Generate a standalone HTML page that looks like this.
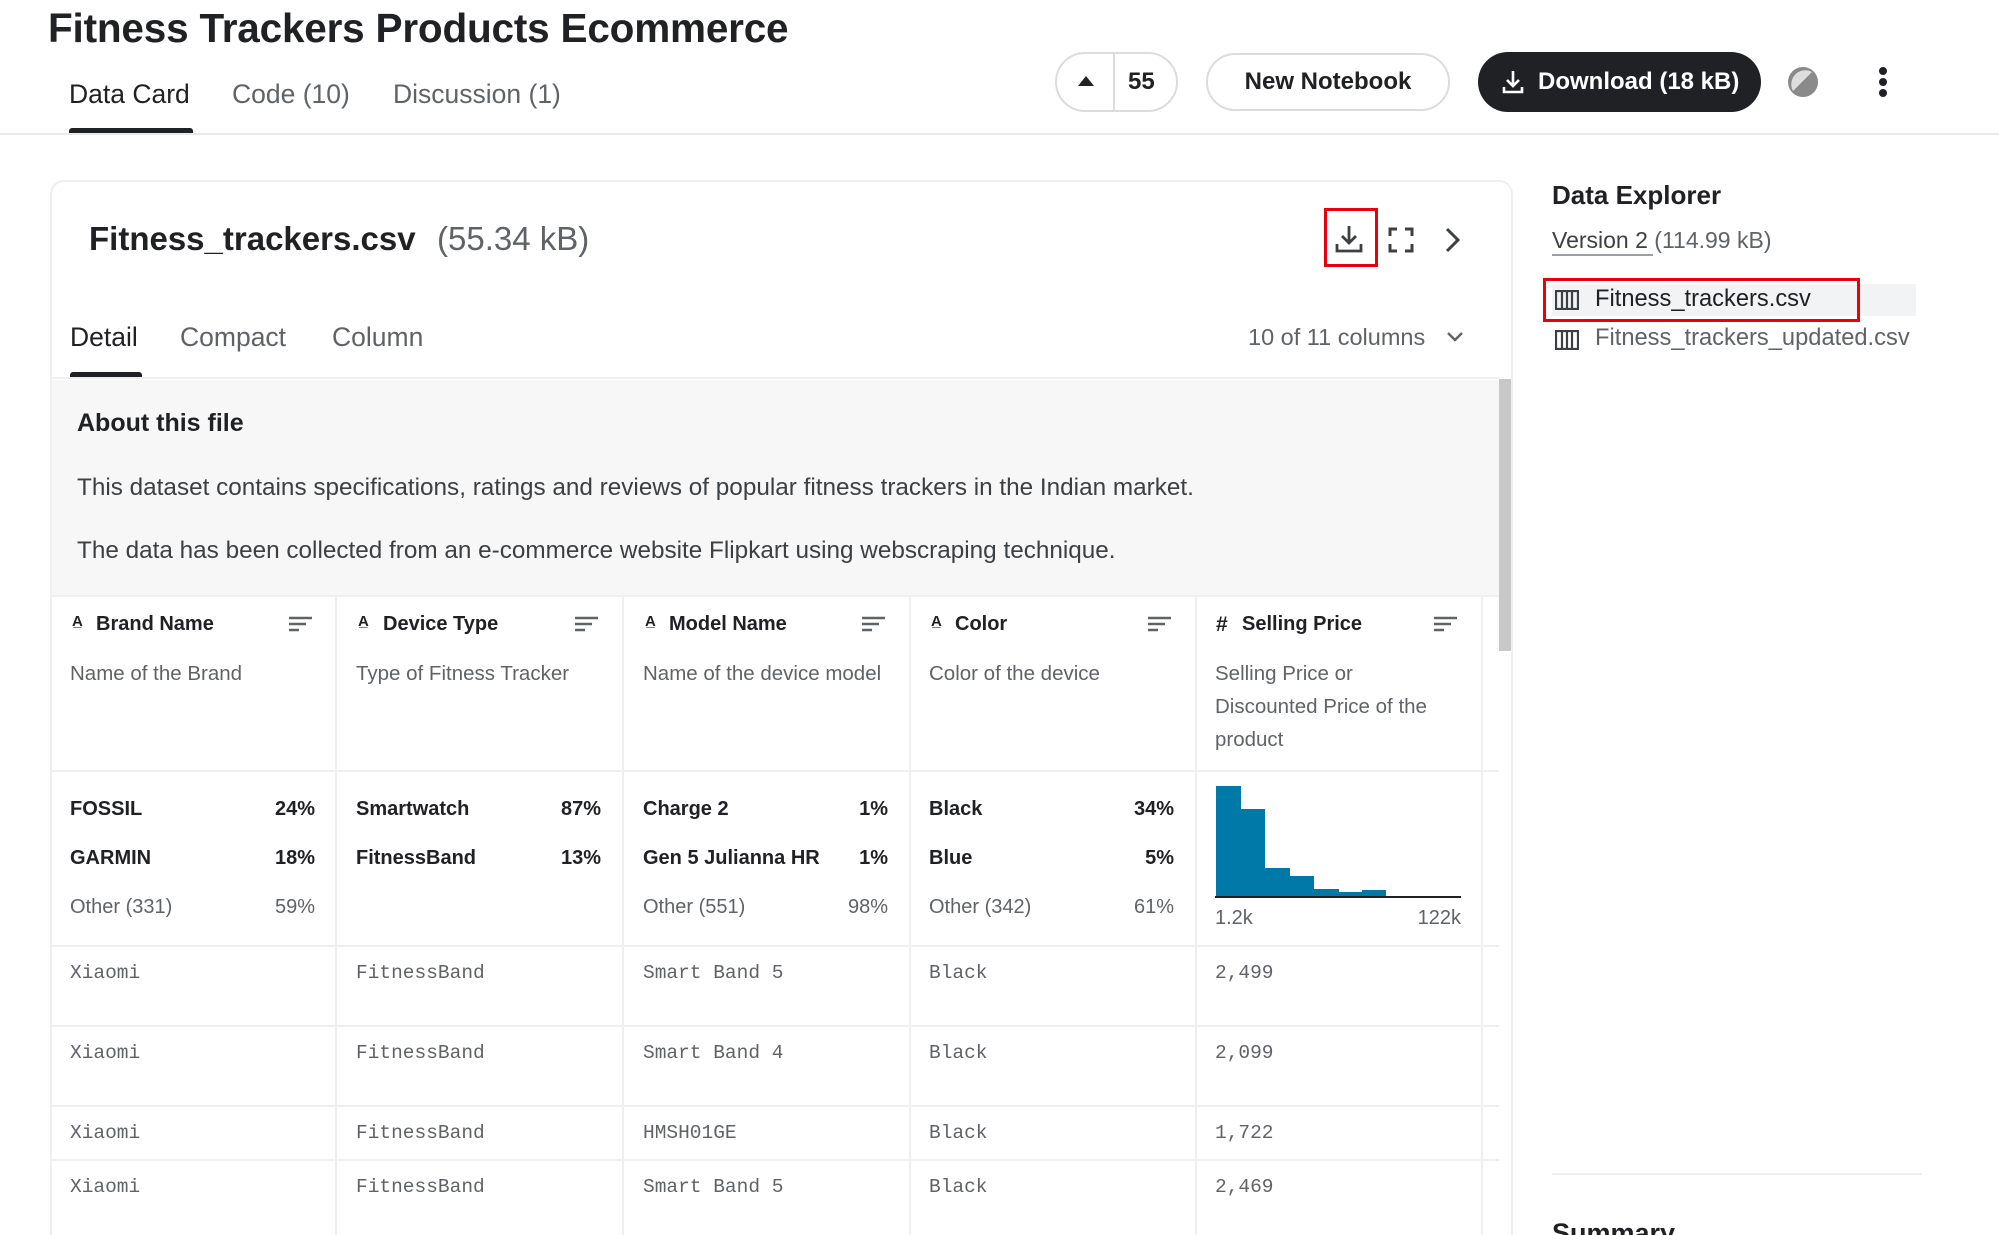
<!DOCTYPE html>
<html style="width:1999px;height:1235px;overflow:hidden"><head><meta charset="utf-8"><style>
*{margin:0;padding:0;box-sizing:border-box}
body{width:1999px;height:1235px;overflow:hidden;background:#fff;font-family:"Liberation Sans",sans-serif;color:#202124;position:relative}
.a{position:absolute;white-space:nowrap}
.t{line-height:1}
.g{color:#5f6368}
.mono{font-family:"Liberation Mono",monospace;color:#5f6368;font-size:19.5px}
.vl{position:absolute;width:2px;background:#efefef}
.hl{position:absolute;height:2px;background:#efefef}
.hd{font-size:20px;font-weight:bold;color:#202124}
.ds{font-size:20.5px;color:#5f6368;line-height:33px}
.st{font-size:20px;font-weight:bold}
</style></head><body>
<div class="a t" style="left:48px;top:8px;font-size:40.5px;font-weight:bold;letter-spacing:-0.2px">Fitness Trackers Products Ecommerce</div>
<div class="a t" style="left:69px;top:81px;font-size:26.5px">Data Card</div>
<div class="a t g" style="left:232px;top:81px;font-size:26.5px">Code (10)</div>
<div class="a t g" style="left:393px;top:81px;font-size:26.5px">Discussion (1)</div>
<div class="a" style="left:69px;top:128px;width:124px;height:5px;background:#202124;border-radius:3px 3px 0 0"></div>
<div class="a" style="left:0;top:133px;width:1999px;height:2px;background:#e8eaed"></div>

<div class="a" style="left:1055px;top:52px;width:123px;height:60px;border:2px solid #dadce0;border-radius:30px"></div>
<div class="a" style="left:1113px;top:53px;width:2px;height:58px;background:#dadce0"></div>
<div class="a" style="left:1078px;top:76px;width:0;height:0;border-left:8px solid transparent;border-right:8px solid transparent;border-bottom:10px solid #202124"></div>
<div class="a t" style="left:1128px;top:70px;font-size:24px;font-weight:bold">55</div>
<div class="a" style="left:1206px;top:53px;width:244px;height:58px;border:2px solid #dadce0;border-radius:30px"></div>
<div class="a t" style="left:1206px;top:70px;width:244px;text-align:center;font-size:24px;font-weight:bold">New Notebook</div>
<div class="a" style="left:1478px;top:52px;width:283px;height:60px;background:#202124;border-radius:30px"></div>
<svg class="a" style="left:1500px;top:68px" width="26" height="28" viewBox="0 0 26 28"><path d="M13 3v15M7 12l6 6 6-6M4 19v5h18v-5" stroke="#fff" stroke-width="2.6" fill="none"/></svg>
<div class="a t" style="left:1538px;top:70px;font-size:24px;font-weight:bold;color:#fff">Download (18 kB)</div>
<svg class="a" style="left:1786px;top:65px" width="34" height="34" viewBox="0 0 34 34"><circle cx="17" cy="17" r="14" fill="#8a8a8a" stroke="#8a8a8a" stroke-width="2"/><path d="M7 26A14 14 0 0 1 26 7Z" fill="#ddd"/></svg>
<div class="a" style="left:1879px;top:67px;width:8px;height:8px;border-radius:50%;background:#202124"></div>
<div class="a" style="left:1879px;top:78px;width:8px;height:8px;border-radius:50%;background:#202124"></div>
<div class="a" style="left:1879px;top:89px;width:8px;height:8px;border-radius:50%;background:#202124"></div>

<div class="a" style="left:50px;top:180px;width:1463px;height:1080px;border:2px solid #efefef;border-radius:14px;overflow:hidden">
<div class="a" style="left:0;top:198px;width:1461px;height:217px;background:#f7f7f7"></div>
</div>
<div class="a t" style="left:89px;top:222px;font-size:33px;font-weight:bold">Fitness_trackers.csv</div>
<div class="a t g" style="left:437px;top:222px;font-size:33px">(55.34 kB)</div>
<div class="a" style="left:1324px;top:208px;width:54px;height:59px;border:3px solid #e8000b"></div>
<svg class="a" style="left:1334px;top:224px" width="30" height="30" viewBox="0 0 30 30"><path d="M15 2v17M8 12l7 7 7-7M3 20v7h24v-7" stroke="#3c4043" stroke-width="2.8" fill="none"/></svg>
<svg class="a" style="left:1388px;top:227px" width="26" height="26" viewBox="0 0 26 26"><path d="M2 9V2h7M17 2h7v7M24 17v7h-7M9 24H2v-7" stroke="#3c4043" stroke-width="3" fill="none"/></svg>
<svg class="a" style="left:1443px;top:226px" width="20" height="28" viewBox="0 0 20 28"><path d="M4 3l11 11L4 25" stroke="#3c4043" stroke-width="3" fill="none"/></svg>

<div class="a t" style="left:70px;top:324px;font-size:26.5px">Detail</div>
<div class="a t g" style="left:180px;top:324px;font-size:26.5px">Compact</div>
<div class="a t g" style="left:332px;top:324px;font-size:26.5px">Column</div>
<div class="a" style="left:70px;top:372px;width:72px;height:5px;background:#202124;border-radius:3px 3px 0 0"></div>
<div class="a t g" style="left:1248px;top:326px;font-size:23.5px">10 of 11 columns</div>
<svg class="a" style="left:1446px;top:330px" width="18" height="14" viewBox="0 0 18 14"><path d="M2 3l7 7 7-7" stroke="#5f6368" stroke-width="2.4" fill="none"/></svg>
<div class="a" style="left:52px;top:377px;width:1447px;height:2px;background:#efefef"></div>
<div class="a" style="left:1499px;top:379px;width:12px;height:272px;background:#c8c8c8"></div>

<div class="a t" style="left:77px;top:411px;font-size:25px;font-weight:bold">About this file</div>
<div class="a t" style="left:77px;top:476px;font-size:24.3px;color:#3c4043">This dataset contains specifications, ratings and reviews of popular fitness trackers in the Indian market.</div>
<div class="a t" style="left:77px;top:539px;font-size:24.3px;color:#3c4043">The data has been collected from an e-commerce website Flipkart using webscraping technique.</div>

<div class="hl" style="left:52px;top:595px;width:1447px"></div>
<div class="hl" style="left:52px;top:770px;width:1447px"></div>
<div class="hl" style="left:52px;top:945px;width:1447px"></div>
<div class="hl" style="left:52px;top:1025px;width:1447px"></div>
<div class="hl" style="left:52px;top:1105px;width:1447px"></div>
<div class="hl" style="left:52px;top:1159px;width:1447px"></div>
<div class="vl" style="left:335px;top:595px;height:640px"></div>
<div class="vl" style="left:622px;top:595px;height:640px"></div>
<div class="vl" style="left:909px;top:595px;height:640px"></div>
<div class="vl" style="left:1195px;top:595px;height:640px"></div>
<div class="vl" style="left:1481px;top:595px;height:640px"></div>

<div class="a hd t" style="left:72px;top:614px;font-size:15px">A&#818;</div><div class="a hd t" style="left:96px;top:614px">Brand Name</div>
<div class="a hd t" style="left:358px;top:614px;font-size:15px">A&#818;</div><div class="a hd t" style="left:383px;top:614px">Device Type</div>
<div class="a hd t" style="left:645px;top:614px;font-size:15px">A&#818;</div><div class="a hd t" style="left:669px;top:614px">Model Name</div>
<div class="a hd t" style="left:931px;top:614px;font-size:15px">A&#818;</div><div class="a hd t" style="left:955px;top:614px">Color</div>
<div class="a hd t" style="left:1216px;top:614px;font-size:21px">#</div><div class="a hd t" style="left:1242px;top:614px">Selling Price</div>
<svg class="a" style="left:289px;top:616px" width="24" height="18" viewBox="0 0 24 18"><path d="M0 2h23M0 8h17M0 14h10" stroke="#5f6368" stroke-width="2.4"/></svg>
<svg class="a" style="left:575px;top:616px" width="24" height="18" viewBox="0 0 24 18"><path d="M0 2h23M0 8h17M0 14h10" stroke="#5f6368" stroke-width="2.4"/></svg>
<svg class="a" style="left:862px;top:616px" width="24" height="18" viewBox="0 0 24 18"><path d="M0 2h23M0 8h17M0 14h10" stroke="#5f6368" stroke-width="2.4"/></svg>
<svg class="a" style="left:1148px;top:616px" width="24" height="18" viewBox="0 0 24 18"><path d="M0 2h23M0 8h17M0 14h10" stroke="#5f6368" stroke-width="2.4"/></svg>
<svg class="a" style="left:1434px;top:616px" width="24" height="18" viewBox="0 0 24 18"><path d="M0 2h23M0 8h17M0 14h10" stroke="#5f6368" stroke-width="2.4"/></svg>

<div class="a ds" style="left:70px;top:657px">Name of the Brand</div>
<div class="a ds" style="left:356px;top:657px">Type of Fitness Tracker</div>
<div class="a ds" style="left:643px;top:657px">Name of the device model</div>
<div class="a ds" style="left:929px;top:657px">Color of the device</div>
<div class="a ds" style="left:1215px;top:657px">Selling Price or<br>Discounted Price of the<br>product</div>

<div class="a st t" style="left:70px;top:799px">FOSSIL</div><div class="a st t" style="left:265px;top:799px;width:50px;text-align:right">24%</div>
<div class="a st t" style="left:70px;top:848px">GARMIN</div><div class="a st t" style="left:265px;top:848px;width:50px;text-align:right">18%</div>
<div class="a t g" style="left:70px;top:897px;font-size:20px">Other (331)</div><div class="a t g" style="left:265px;top:897px;width:50px;text-align:right;font-size:20px">59%</div>

<div class="a st t" style="left:356px;top:799px">Smartwatch</div><div class="a st t" style="left:551px;top:799px;width:50px;text-align:right">87%</div>
<div class="a st t" style="left:356px;top:848px">FitnessBand</div><div class="a st t" style="left:551px;top:848px;width:50px;text-align:right">13%</div>

<div class="a st t" style="left:643px;top:799px">Charge 2</div><div class="a st t" style="left:838px;top:799px;width:50px;text-align:right">1%</div>
<div class="a st t" style="left:643px;top:848px">Gen 5 Julianna HR</div><div class="a st t" style="left:838px;top:848px;width:50px;text-align:right">1%</div>
<div class="a t g" style="left:643px;top:897px;font-size:20px">Other (551)</div><div class="a t g" style="left:838px;top:897px;width:50px;text-align:right;font-size:20px">98%</div>

<div class="a st t" style="left:929px;top:799px">Black</div><div class="a st t" style="left:1124px;top:799px;width:50px;text-align:right">34%</div>
<div class="a st t" style="left:929px;top:848px">Blue</div><div class="a st t" style="left:1124px;top:848px;width:50px;text-align:right">5%</div>
<div class="a t g" style="left:929px;top:897px;font-size:20px">Other (342)</div><div class="a t g" style="left:1124px;top:897px;width:50px;text-align:right;font-size:20px">61%</div>

<svg class="a" style="left:1214px;top:784px" width="250" height="116" viewBox="1214 784 250 116">
<g fill="#0079a8">
<rect x="1216" y="786" width="25" height="112"/>
<rect x="1241" y="809" width="24" height="89"/>
<rect x="1265" y="868" width="25" height="30"/>
<rect x="1290" y="876" width="24" height="22"/>
<rect x="1314" y="889" width="25" height="9"/>
<rect x="1339" y="892" width="23" height="6"/>
<rect x="1362" y="890" width="24" height="8"/>
<rect x="1436" y="896" width="24" height="2"/>
</g>
<rect x="1215" y="896" width="246" height="2" fill="#202124"/>
</svg>
<div class="a t g" style="left:1215px;top:908px;font-size:20px">1.2k</div>
<div class="a t g" style="left:1400px;top:908px;width:61px;text-align:right;font-size:20px">122k</div>

<div class="a mono t" style="left:70px;top:964px">Xiaomi</div><div class="a mono t" style="left:356px;top:964px">FitnessBand</div><div class="a mono t" style="left:643px;top:964px">Smart Band 5</div><div class="a mono t" style="left:929px;top:964px">Black</div><div class="a mono t" style="left:1215px;top:964px">2,499</div>
<div class="a mono t" style="left:70px;top:1044px">Xiaomi</div><div class="a mono t" style="left:356px;top:1044px">FitnessBand</div><div class="a mono t" style="left:643px;top:1044px">Smart Band 4</div><div class="a mono t" style="left:929px;top:1044px">Black</div><div class="a mono t" style="left:1215px;top:1044px">2,099</div>
<div class="a mono t" style="left:70px;top:1124px">Xiaomi</div><div class="a mono t" style="left:356px;top:1124px">FitnessBand</div><div class="a mono t" style="left:643px;top:1124px">HMSH01GE</div><div class="a mono t" style="left:929px;top:1124px">Black</div><div class="a mono t" style="left:1215px;top:1124px">1,722</div>
<div class="a mono t" style="left:70px;top:1178px">Xiaomi</div><div class="a mono t" style="left:356px;top:1178px">FitnessBand</div><div class="a mono t" style="left:643px;top:1178px">Smart Band 5</div><div class="a mono t" style="left:929px;top:1178px">Black</div><div class="a mono t" style="left:1215px;top:1178px">2,469</div>

<div class="a t" style="left:1552px;top:182px;font-size:26px;font-weight:bold">Data Explorer</div>
<div class="a t" style="left:1552px;top:229px;font-size:23px;color:#3c4043">Version 2 <span class="g">(114.99 kB)</span></div>
<div class="a" style="left:1552px;top:254px;width:101px;height:2px;background:#9aa0a6"></div>
<div class="a" style="left:1552px;top:284px;width:364px;height:32px;background:#f1f3f4"></div>
<div class="a" style="left:1543px;top:278px;width:317px;height:44px;border:3px solid #e8000b"></div>
<svg class="a" style="left:1555px;top:290px" width="24" height="20" viewBox="0 0 24 20"><path d="M1 1h22v18H1zM7 1v18M12 1v18M17 1v18" stroke="#3c4043" stroke-width="2.2" fill="none"/></svg>
<div class="a t" style="left:1595px;top:288px;font-size:23.7px;color:#202124">Fitness_trackers.csv</div>
<svg class="a" style="left:1555px;top:330px" width="24" height="20" viewBox="0 0 24 20"><path d="M1 1h22v18H1zM7 1v18M12 1v18M17 1v18" stroke="#3c4043" stroke-width="2.2" fill="none"/></svg>
<div class="a t g" style="left:1595px;top:327px;font-size:23.7px">Fitness_trackers_updated.csv</div>
<div class="a" style="left:1552px;top:1173px;width:370px;height:2px;background:#efefef"></div>
<div class="a t" style="left:1552px;top:1220px;font-size:27px;font-weight:bold">Summary</div>
</body></html>
